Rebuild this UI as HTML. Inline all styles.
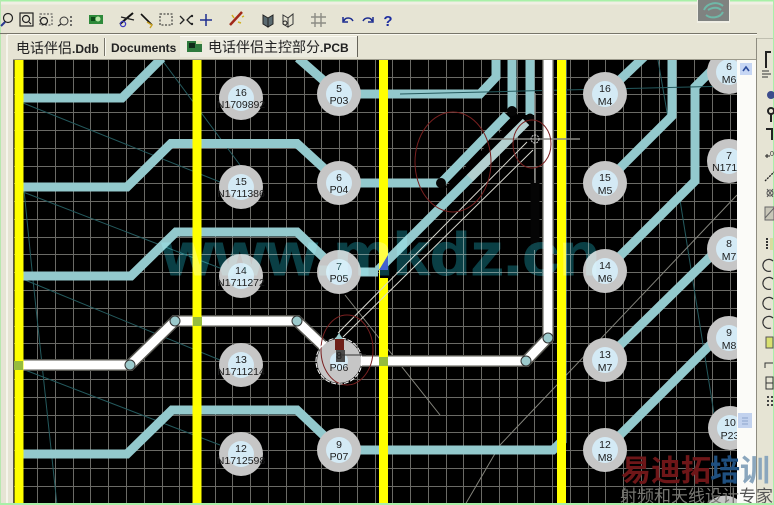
<!DOCTYPE html>
<html>
<head>
<meta charset="utf-8">
<style>
html,body{margin:0;padding:0;background:#e6e4d4;}
body{width:774px;height:505px;overflow:hidden;position:relative;}
svg{position:absolute;left:0;top:0;display:block;filter:blur(0.35px);}
text{font-family:"Liberation Sans","Noto Sans CJK SC",sans-serif;}
.t{fill:none;stroke:#93c9cd;stroke-width:9;stroke-linejoin:miter;}
.rn{fill:none;stroke:#245a5e;stroke-width:1;}
.gr{fill:none;stroke:#84847c;stroke-width:1;}
.pad{fill:#c6c6c6;}
.inr{fill:#d4eaf5;}
.pt{font-size:10.5px;fill:#1c1c1c;text-anchor:middle;}
.ic{fill:none;stroke:#222;stroke-width:1.2;}
</style>
</head>
<body>
<svg width="774" height="505" viewBox="0 0 774 505" xmlns="http://www.w3.org/2000/svg">
<defs>
<clipPath id="cv"><rect x="14" y="60" width="723" height="445"/></clipPath>
</defs>

<!-- chrome -->
<rect width="774" height="505" fill="#e6e4d4"/>
<rect x="0" y="0" width="774" height="1.5" fill="#a8f0a8"/>
<rect x="0" y="1.5" width="774" height="3" fill="#f0efe4"/>
<rect x="0" y="0" width="1" height="505" fill="#b8e8b0"/>
<rect x="773" y="0" width="1" height="505" fill="#a8f0a8"/>
<rect x="6" y="35" width="2" height="468" fill="#f6f5ec"/>
<rect x="0" y="33" width="757" height="1" fill="#77756a"/>
<rect x="7" y="34" width="750" height="1" fill="#fbfaf2"/>
<rect x="757" y="38" width="16" height="1" fill="#c0bfb0"/>

<!-- logo -->
<rect x="697" y="0" width="33" height="23" fill="#efeee4"/>
<rect x="698" y="0" width="31" height="21" fill="#7f8280"/>
<path d="M704 10c3-7 13-9 19-4M723 12c-3 6-12 7-17 3M708 10c5-3 10-3 13 0" fill="none" stroke="#6fb8a8" stroke-width="2"/>

<!-- toolbar icons -->
<g>
<circle cx="8" cy="18" r="4.5" class="ic"/><path d="M5 22L1 26" stroke="#2b3a90" stroke-width="2"/>
<rect x="20" y="13" width="13" height="13" class="ic"/><circle cx="26" cy="19" r="3.5" class="ic"/><path d="M29 22l2 2" class="ic"/>
<rect x="40" y="14" width="12" height="11" fill="none" stroke="#444" stroke-width="1" stroke-dasharray="2 1.5"/><circle cx="44" cy="21" r="3.5" class="ic"/>
<circle cx="64" cy="21" r="4" fill="none" stroke="#333"/><path d="M61 24l-3 2" class="ic"/><path d="M70 17h2M70 21h2M70 25h2" stroke="#444" stroke-width="1.5"/>
<rect x="89" y="15" width="14" height="9" fill="#2e8a3a"/><circle cx="98" cy="19" r="2.5" fill="#b8e8a8"/><rect x="91" y="17" width="4" height="4" fill="#0c4a18"/>
<path d="M120 24l13-11" stroke="#111" stroke-width="2"/><path d="M121 17l13 3" stroke="#222" stroke-width="1.4"/><circle cx="123" cy="24" r="2.6" fill="none" stroke="#3a3ac0" stroke-width="1.3"/>
<path d="M141 14l11 11" stroke="#111" stroke-width="1.6"/><path d="M147 22l5 3-2 3" stroke="#c8a020" stroke-width="1.4" fill="none"/>
<rect x="160" y="14" width="12" height="11" fill="none" stroke="#222" stroke-dasharray="2 1.5"/>
<path d="M180 16l4 4-4 4M191 16l-4 4 4 4" fill="none" stroke="#222" stroke-width="1.3"/><circle cx="192" cy="16" r="1.2" fill="#222"/><circle cx="192" cy="24" r="1.2" fill="#222"/>
<path d="M200 20h12M206 14v12" stroke="#1f2f90" stroke-width="1.5"/>
<path d="M230 25l12-13" stroke="#a02818" stroke-width="2.5"/><path d="M232 15l2 3M238 22l3 1M242 17l2-1" stroke="#d0b020" stroke-width="1.5"/>
<path d="M263 15l5 3v9l-5-3zM273 15l-5 3v9l5-3z" fill="#5a6a70" stroke="#222"/>
<path d="M283 15l5 3v9l-5-3zM293 14l-5 4v9l5-3z" fill="#e6e4d4" stroke="#333"/><circle cx="285" cy="23" r="2" fill="none" stroke="#222"/>
<path d="M311 17h15M311 23h15M315 13v14M321 13v14" stroke="#8c8c84" stroke-width="1.4"/>
<path d="M344 21c1-4 7-4 9 0M343 17v5h5" fill="none" stroke="#1c2c90" stroke-width="1.5"/>
<path d="M372 21c-1-4-7-4-9 0M373 17v5h-5" fill="none" stroke="#1c2c90" stroke-width="1.5"/>
<text x="388" y="26" font-size="15" font-weight="bold" fill="#1c2ca0" text-anchor="middle">?</text>
</g>

<!-- tabs -->
<rect x="180" y="36" width="177" height="21" fill="#ecebe0"/>
<rect x="104" y="38" width="1" height="18" fill="#77756a"/>
<rect x="105" y="38" width="1" height="18" fill="#fbfaf2"/>
<rect x="357" y="36" width="1" height="21" fill="#66645a"/>
<rect x="180" y="36" width="177" height="1" fill="#fbfaf2"/>
<text x="16" y="53" font-size="14" fill="#222">电话伴侣<tspan font-size="12" font-weight="bold">.Ddb</tspan></text>
<text x="111" y="52" font-size="12" font-weight="bold" fill="#222">Documents</text>
<rect x="187" y="41" width="15" height="11" fill="#2e7a3e"/><rect x="189" y="43" width="6" height="5" fill="#0e2a18"/><rect x="196" y="41" width="6" height="3" fill="#e0e8c0"/>
<text x="208" y="52" font-size="14" fill="#222">电话伴侣主控部分<tspan font-size="12" font-weight="bold">.PCB</tspan></text>

<!-- canvas frame -->
<rect x="13" y="59" width="744" height="446" fill="#f4f3ec"/>
<rect x="13" y="59" width="1" height="446" fill="#55534a"/>
<rect x="13" y="59" width="744" height="1" fill="#9c9a8c"/>
<rect x="737" y="60" width="19" height="445" fill="#fbfbf8"/>
<rect x="756" y="38" width="1" height="467" fill="#8e8c80"/>
<rect x="757" y="39" width="16" height="466" fill="#e6e4d4"/>

<!-- scrollbar buttons -->
<rect x="740" y="63" width="12" height="12" fill="#c6d6f4"/>
<path d="M743 71l3-4 3 4" fill="none" stroke="#2c4c9c" stroke-width="1.6"/>
<rect x="738" y="413" width="14" height="15" fill="#c2d2ee"/>
<path d="M742 418h6M742 421h6M742 424h6" stroke="#8ca4cc" stroke-width="1"/>

<g clip-path="url(#cv)">
<rect x="14" y="60" width="723" height="445" fill="#000"/>
<!-- grid -->
<path fill="none" stroke="#6a6a66" stroke-width="1" d="M37.500 60V505M55.500 60V505M73.500 60V505M90.500 60V505M108.500 60V505M126.500 60V505M144.500 60V505M162.500 60V505M179.500 60V505M215.500 60V505M232.500 60V505M250.500 60V505M268.500 60V505M286.500 60V505M304.500 60V505M321.500 60V505M339.500 60V505M357.500 60V505M375.500 60V505M392.500 60V505M410.500 60V505M428.500 60V505M446.500 60V505M463.500 60V505M481.500 60V505M499.500 60V505M517.500 60V505M534.500 60V505M552.500 60V505M570.500 60V505M588.500 60V505M605.500 60V505M623.500 60V505M641.500 60V505M659.500 60V505M676.500 60V505M694.500 60V505M712.500 60V505M730.500 60V505M14 77.500H737M14 94.500H737M14 112.500H737M14 130.500H737M14 148.500H737M14 166.500H737M14 183.500H737M14 201.500H737M14 219.500H737M14 237.500H737M14 254.500H737M14 272.500H737M14 290.500H737M14 308.500H737M14 326.500H737M14 343.500H737M14 361.500H737M14 379.500H737M14 397.500H737M14 415.500H737M14 432.500H737M14 450.500H737M14 468.500H737M14 486.500H737M14 503.500H737"/>

<!-- black copper -->
<path d="M522 116L449 190" stroke="#000" stroke-width="9" fill="none"/>
<path d="M384 277L400 261" stroke="#000" stroke-width="11" fill="none"/>
<path d="M535 180V250" stroke="#050505" stroke-width="9"/>

<!-- ratsnest -->
<path class="rn" d="M23 103L220 182M23 192L225 270M25 280L220 360M25 370L220 445"/>
<path class="rn" d="M24 190L33 280L57 505"/>
<path class="rn" d="M162 60L240 165"/>
<path class="rn" d="M658 60L668 118M680 200L715 420"/>
<path class="gr" d="M737 195L500 445L465 505"/>
<path class="gr" d="M345 295L440 415"/>

<!-- tracks -->
<path class="t" d="M20 98H122L162 58"/>
<path class="t" d="M20 187H127L171 143.500H297L339 182"/>
<path class="t" d="M20 276H131L176 232H297L339 272"/>
<path class="t" d="M20 454H127L172 410H297L339 450H553L562 441V58"/>
<path class="t" d="M298 58L339 94H480L496 77V58"/>
<path class="t" d="M339 183H441M441 183L507 115M512 110V58"/>
<path class="t" d="M530 115V58M526 122L378 270M378 272H339"/>
<path d="M526 122L470 178" fill="none" stroke="#b4d0d0" stroke-width="9"/>
<path class="t" d="M605 94L645 56"/>
<path class="t" d="M605 183L672 116V58"/>
<path class="t" d="M605 271L695 181V87L711 71H735"/>
<path class="t" d="M605 360L711 256L729 249"/>
<path class="t" d="M605 450L711 344L729 338"/>
<path class="rn" d="M400 94L730 86"/>

<!-- vias -->
<circle cx="512" cy="111" r="5" fill="#050505"/>
<circle cx="530" cy="118" r="4.500" fill="#050505"/>
<circle cx="441" cy="183" r="5" fill="#050505"/>

<!-- white tracks -->
<path d="M18 365H130L175 321H297L339 361H526L548 338V58" fill="none" stroke="#55554f" stroke-width="12"/>
<path d="M18 365H130L175 321H297L339 361H526L548 338V58" fill="none" stroke="#fff" stroke-width="9"/>

<!-- yellow -->
<rect x="14.500" y="60" width="9" height="445" fill="#ffff00"/>
<rect x="192.500" y="60" width="9" height="445" fill="#ffff00"/>
<rect x="379" y="60" width="9" height="445" fill="#ffff00"/>
<rect x="557" y="60" width="9" height="445" fill="#ffff00"/>
<rect x="380" y="268" width="8" height="10" fill="#000"/>
<path d="M379 270L388 255V270Z" fill="#3a2fc0"/>

<!-- junction squares -->
<rect x="14" y="361" width="9" height="9" fill="#96bc3c"/>
<rect x="193" y="317" width="9" height="9" fill="#96bc3c"/>
<rect x="379" y="357" width="9" height="9" fill="#96bc3c"/>
<g fill="#9ccacc" stroke="#333" stroke-width="1">
<circle cx="130" cy="365" r="5"/><circle cx="175" cy="321" r="5"/><circle cx="297" cy="321" r="5"/>
<circle cx="526" cy="361" r="5"/><circle cx="548" cy="338" r="5"/>
</g>

<!-- pads -->
<g>
<circle class="pad" cx="241" cy="98" r="22"/><circle class="inr" cx="241" cy="98" r="13"/>
<circle class="pad" cx="241" cy="187" r="22"/><circle class="inr" cx="241" cy="187" r="13"/>
<circle class="pad" cx="241" cy="276" r="22"/><circle class="inr" cx="241" cy="276" r="13"/>
<circle class="pad" cx="241" cy="365" r="22"/><circle class="inr" cx="241" cy="365" r="13"/>
<circle class="pad" cx="241" cy="454" r="22"/><circle class="inr" cx="241" cy="454" r="13"/>
<circle class="pad" cx="339" cy="94" r="22"/><circle class="inr" cx="339" cy="94" r="13"/>
<circle class="pad" cx="339" cy="183" r="22"/><circle class="inr" cx="339" cy="183" r="13"/>
<circle class="pad" cx="339" cy="272" r="22"/><circle class="inr" cx="339" cy="272" r="13"/>
<circle class="pad" cx="339" cy="361" r="22"/><circle class="inr" cx="339" cy="361" r="9"/>
<circle class="pad" cx="339" cy="450" r="22"/><circle class="inr" cx="339" cy="450" r="13"/>
<circle class="pad" cx="605" cy="94" r="22"/><circle class="inr" cx="605" cy="94" r="13"/>
<circle class="pad" cx="605" cy="183" r="22"/><circle class="inr" cx="605" cy="183" r="13"/>
<circle class="pad" cx="605" cy="271" r="22"/><circle class="inr" cx="605" cy="271" r="13"/>
<circle class="pad" cx="605" cy="360" r="22"/><circle class="inr" cx="605" cy="360" r="13"/>
<circle class="pad" cx="605" cy="450" r="22"/><circle class="inr" cx="605" cy="450" r="13"/>
<circle class="pad" cx="729" cy="72" r="22"/><circle class="inr" cx="729" cy="72" r="13"/>
<circle class="pad" cx="729" cy="161" r="22"/><circle class="inr" cx="729" cy="161" r="13"/>
<circle class="pad" cx="729" cy="249" r="22"/><circle class="inr" cx="729" cy="249" r="13"/>
<circle class="pad" cx="729" cy="338" r="22"/><circle class="inr" cx="729" cy="338" r="13"/>
<circle class="pad" cx="730" cy="428" r="22"/><circle class="inr" cx="730" cy="428" r="13"/>
<path class="pad" d="M707 505A22 22 0 0 1 743 505Z"/>
</g>

<!-- selection lines -->
<path d="M527 142L338 333M533 150L343 337" stroke="#d8d8d0" stroke-width="1" fill="none"/>
<path d="M490 139H580" stroke="#8a8a86" stroke-width="1.500"/>
<path d="M535 93V183" stroke="#8a8a86" stroke-width="1.500"/>
<circle cx="535" cy="139" r="4" fill="none" stroke="#ccc" stroke-dasharray="2 1"/>

<!-- red ellipses -->
<ellipse cx="453" cy="162" rx="38" ry="50" fill="none" stroke="#7a2020" stroke-width="1"/>
<ellipse cx="532" cy="144" rx="19" ry="24" fill="none" stroke="#7a2020" stroke-width="1"/>
<ellipse cx="347" cy="350" rx="26" ry="35" fill="none" stroke="#7a2020" stroke-width="1"/>

<!-- pad 8 selected -->
<circle cx="339" cy="361" r="23" fill="none" stroke="#fff" stroke-dasharray="5 1.500"/>
<rect x="335" y="339" width="9" height="11" fill="#6e1f18"/>
<path d="M335 339l4-6 4 6z" fill="#9ccacc"/>
<rect x="336" y="350" width="9" height="12" fill="#4a4a4a"/>
<path d="M339 355H366" stroke="#333"/>

<!-- pad labels -->
<g>
<text class="pt" x="241" y="96">16</text><text class="pt" x="241" y="108">N1709892</text>
<text class="pt" x="241" y="185">15</text><text class="pt" x="241" y="197">N1711386</text>
<text class="pt" x="241" y="274">14</text><text class="pt" x="241" y="286">N1711272</text>
<text class="pt" x="241" y="363">13</text><text class="pt" x="241" y="375">N1711214</text>
<text class="pt" x="241" y="452">12</text><text class="pt" x="241" y="464">N1712598</text>
<text class="pt" x="339" y="92">5</text><text class="pt" x="339" y="104">P03</text>
<text class="pt" x="339" y="181">6</text><text class="pt" x="339" y="193">P04</text>
<text class="pt" x="339" y="270">7</text><text class="pt" x="339" y="282">P05</text>
<text class="pt" x="339" y="359">8</text><text class="pt" x="339" y="371">P06</text>
<text class="pt" x="339" y="448">9</text><text class="pt" x="339" y="460">P07</text>
<text class="pt" x="605" y="92">16</text><text class="pt" x="605" y="105">M4</text>
<text class="pt" x="605" y="181">15</text><text class="pt" x="605" y="194">M5</text>
<text class="pt" x="605" y="269">14</text><text class="pt" x="605" y="282">M6</text>
<text class="pt" x="605" y="358">13</text><text class="pt" x="605" y="371">M7</text>
<text class="pt" x="605" y="448">12</text><text class="pt" x="605" y="461">M8</text>
<text class="pt" x="729" y="70">6</text><text class="pt" x="729" y="83">M6</text>
<text class="pt" x="729" y="159">7</text><text class="pt" x="729" y="171">N1710:</text>
<text class="pt" x="729" y="247">8</text><text class="pt" x="729" y="260">M7</text>
<text class="pt" x="729" y="336">9</text><text class="pt" x="729" y="349">M8</text>
<text class="pt" x="730" y="426">10</text><text class="pt" x="730" y="439">P23</text>
</g>

<!-- watermark www -->
<text x="162" y="275" font-size="60" font-weight="bold" textLength="438" lengthAdjust="spacingAndGlyphs" fill="#0a3f45" stroke="#0a3f45" stroke-width="1" style="mix-blend-mode:screen">www.mkdz.cn</text>
</g>

<!-- right tool panel icons -->
<g>
<path d="M766 68V52h5" fill="none" stroke="#222" stroke-width="2"/>
<path d="M762 71h7M762 74h9M762 77h6" stroke="#333" stroke-width="1"/>
<circle cx="771" cy="95" r="4" fill="#3c4c8c"/>
<circle cx="771" cy="111" r="3" fill="none" stroke="#222" stroke-width="2"/><path d="M771 114v8" stroke="#222" stroke-width="2"/>
<path d="M766 129h6v11" fill="none" stroke="#222" stroke-width="2"/>
<path d="M765 156h5M767 154v4" stroke="#222"/><text x="770" y="156" font-size="7" fill="#333">0</text>
<path d="M765 181l9-9" stroke="#222" stroke-dasharray="2 1" stroke-width="1.300"/>
<path d="M767 189l6 8M773 189l-6 8" stroke="#555"/><circle cx="770" cy="193" r="3" fill="none" stroke="#555"/>
<rect x="765" y="207" width="9" height="13" fill="#c8c6b8" stroke="#666"/><path d="M765 218l9-10" stroke="#666"/>
<path d="M767 238v12" stroke="#333" stroke-width="2" stroke-dasharray="2 1"/>
<rect x="770" y="238" width="3" height="12" fill="#d8dca0"/>
<g fill="none" stroke="#333" stroke-width="1.200">
<path d="M773 261a6 6 0 1 0-2 10"/>
<path d="M773 279a6 6 0 1 0-2 10"/>
<path d="M773 299a6 6 0 1 0-2 10"/>
<path d="M773 318a6 6 0 1 0-2 10"/>
</g>
<rect x="766" y="337" width="7" height="11" fill="#d8e070" stroke="#555"/>
<path d="M765 368v-5h8" fill="none" stroke="#333"/>
<path d="M766 377h7v12h-7zM766 383h7" fill="none" stroke="#333"/>
<path d="M767 397h2M771 397h2M767 401h2M771 401h2M767 405h2M771 405h2" stroke="#444" stroke-width="2"/>
</g>

<!-- bottom watermark -->
<text x="621" y="481" font-size="30" font-weight="bold" fill="#6e1618">易迪拓</text>
<text x="710" y="481" font-size="30" font-weight="bold" fill="#1f5080">培<tspan fill="#8aa6bd">训</tspan></text>
<text x="620" y="502" font-size="17" fill="#777772">射频和天线设计<tspan fill="#555">专家</tspan></text>
<rect x="0" y="503" width="774" height="2" fill="#a8f0a8"/>
</svg>
</body>
</html>
